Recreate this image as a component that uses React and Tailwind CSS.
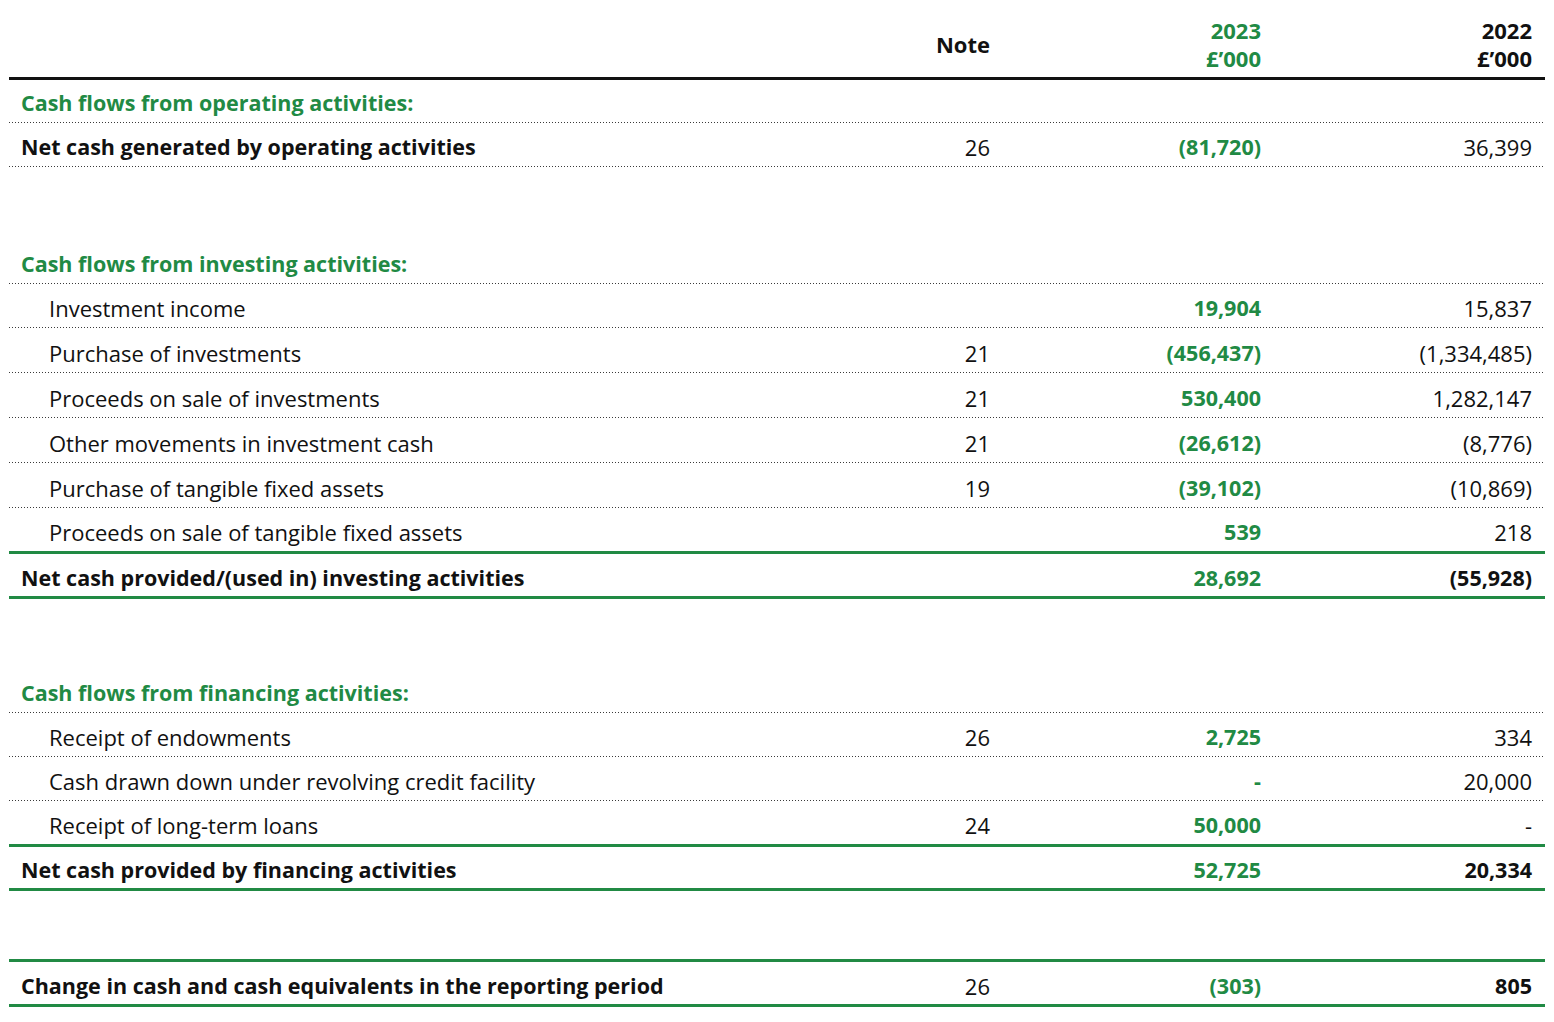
const GREEN = 'text-[#218a44]'

const sections = [
  {
    title: 'Cash flows from operating activities:',
    rows: [
      { label: 'Net cash generated by operating activities', bold: true, note: '26', a: '(81,720)', b: '36,399', line: 'dot' },
    ],
  },
  {
    title: 'Cash flows from investing activities:',
    gap: 'pt-[74px]',
    rows: [
      { label: 'Investment income', a: '19,904', b: '15,837', line: 'dot' },
      { label: 'Purchase of investments', note: '21', a: '(456,437)', b: '(1,334,485)', line: 'dot', h: 'h-[44px]' },
      { label: 'Proceeds on sale of investments', note: '21', a: '530,400', b: '1,282,147', line: 'dot', h: 'h-[44px]' },
      { label: 'Other movements in investment cash', note: '21', a: '(26,612)', b: '(8,776)', line: 'dot', h: 'h-[44px]' },
      { label: 'Purchase of tangible fixed assets', note: '19', a: '(39,102)', b: '(10,869)', line: 'dot', h: 'h-[44px]' },
      { label: 'Proceeds on sale of tangible fixed assets', a: '539', b: '218', line: 'green', h: 'h-[43px]' },
      { label: 'Net cash provided/(used in) investing activities', bold: true, a: '28,692', b: '(55,928)', bBold: true, line: 'green', h: 'h-[42px]' },
    ],
  },
  {
    title: 'Cash flows from financing activities:',
    gap: 'pt-[71px]',
    rows: [
      { label: 'Receipt of endowments', note: '26', a: '2,725', b: '334', line: 'dot' },
      { label: 'Cash drawn down under revolving credit facility', a: '-', b: '20,000', line: 'dot' },
      { label: 'Receipt of long-term loans', note: '24', a: '50,000', b: '-', line: 'green' },
      { label: 'Net cash provided by financing activities', bold: true, a: '52,725', b: '20,334', bBold: true, line: 'green', h: 'h-[41px]' },
    ],
  },
]

function Dots() {
  return <div className="h-px bg-[linear-gradient(to_right,#3a3a3a_1px,transparent_1px)] bg-[length:3px_1px]" />
}

function GreenRule() {
  return <div className="h-[3px] bg-[#218a44]" />
}

function Row({ label, bold, note, a, b, bBold, line, h = 'h-[43px]' }) {
  return (
    <>
      <div className={`grid ${h} grid-cols-[1fr_140px_271px_271px] items-center pt-[5px] pr-[13px]`}>
        <div className={`${bold ? 'pl-3 text-[21.5px] font-bold' : 'pl-10'} text-[#111]`}>{label}</div>
        <div className="text-right text-[#111]">{note}</div>
        <div className={`text-right text-[21.5px] font-bold ${GREEN}`}>{a}</div>
        <div className={`text-right text-[#111] ${bBold ? 'text-[21.5px] font-bold' : ''}`}>{b}</div>
      </div>
      {line === 'dot' ? <Dots /> : <GreenRule />}
    </>
  )
}

export default function App() {
  return (
    <div className="min-h-[1022px] w-[1554px] bg-white pl-[9px] pr-[9px] text-[22px] font-['Open_Sans','Noto_Sans',sans-serif] leading-none">
      <div className="grid h-[77px] grid-cols-[1fr_140px_271px_271px] items-end pb-[5px] pr-[13px] text-[22px] font-bold">
        <div />
        <div className="mb-[14px] text-right leading-[28px] text-[#111]">Note</div>
        <div className={`text-right leading-[28px] ${GREEN}`}>2023<br />£’000</div>
        <div className="text-right leading-[28px] text-[#111]">2022<br />£’000</div>
      </div>
      <div className="h-[3px] bg-[#111]" />
      {sections.map(s => (
        <div key={s.title} className={s.gap || ''}>
          <div className={`flex h-[42px] items-center pt-[4px] pl-3 text-[21.5px] font-bold ${GREEN}`}>{s.title}</div>
          <Dots />
          {s.rows.map(r => <Row key={r.label} {...r} />)}
        </div>
      ))}
      <div className="pt-[68px]">
        <GreenRule />
        <Row label="Change in cash and cash equivalents in the reporting period" bold note="26" a="(303)" b="805" bBold line="green" h="h-[42px]" />
      </div>
    </div>
  )
}
